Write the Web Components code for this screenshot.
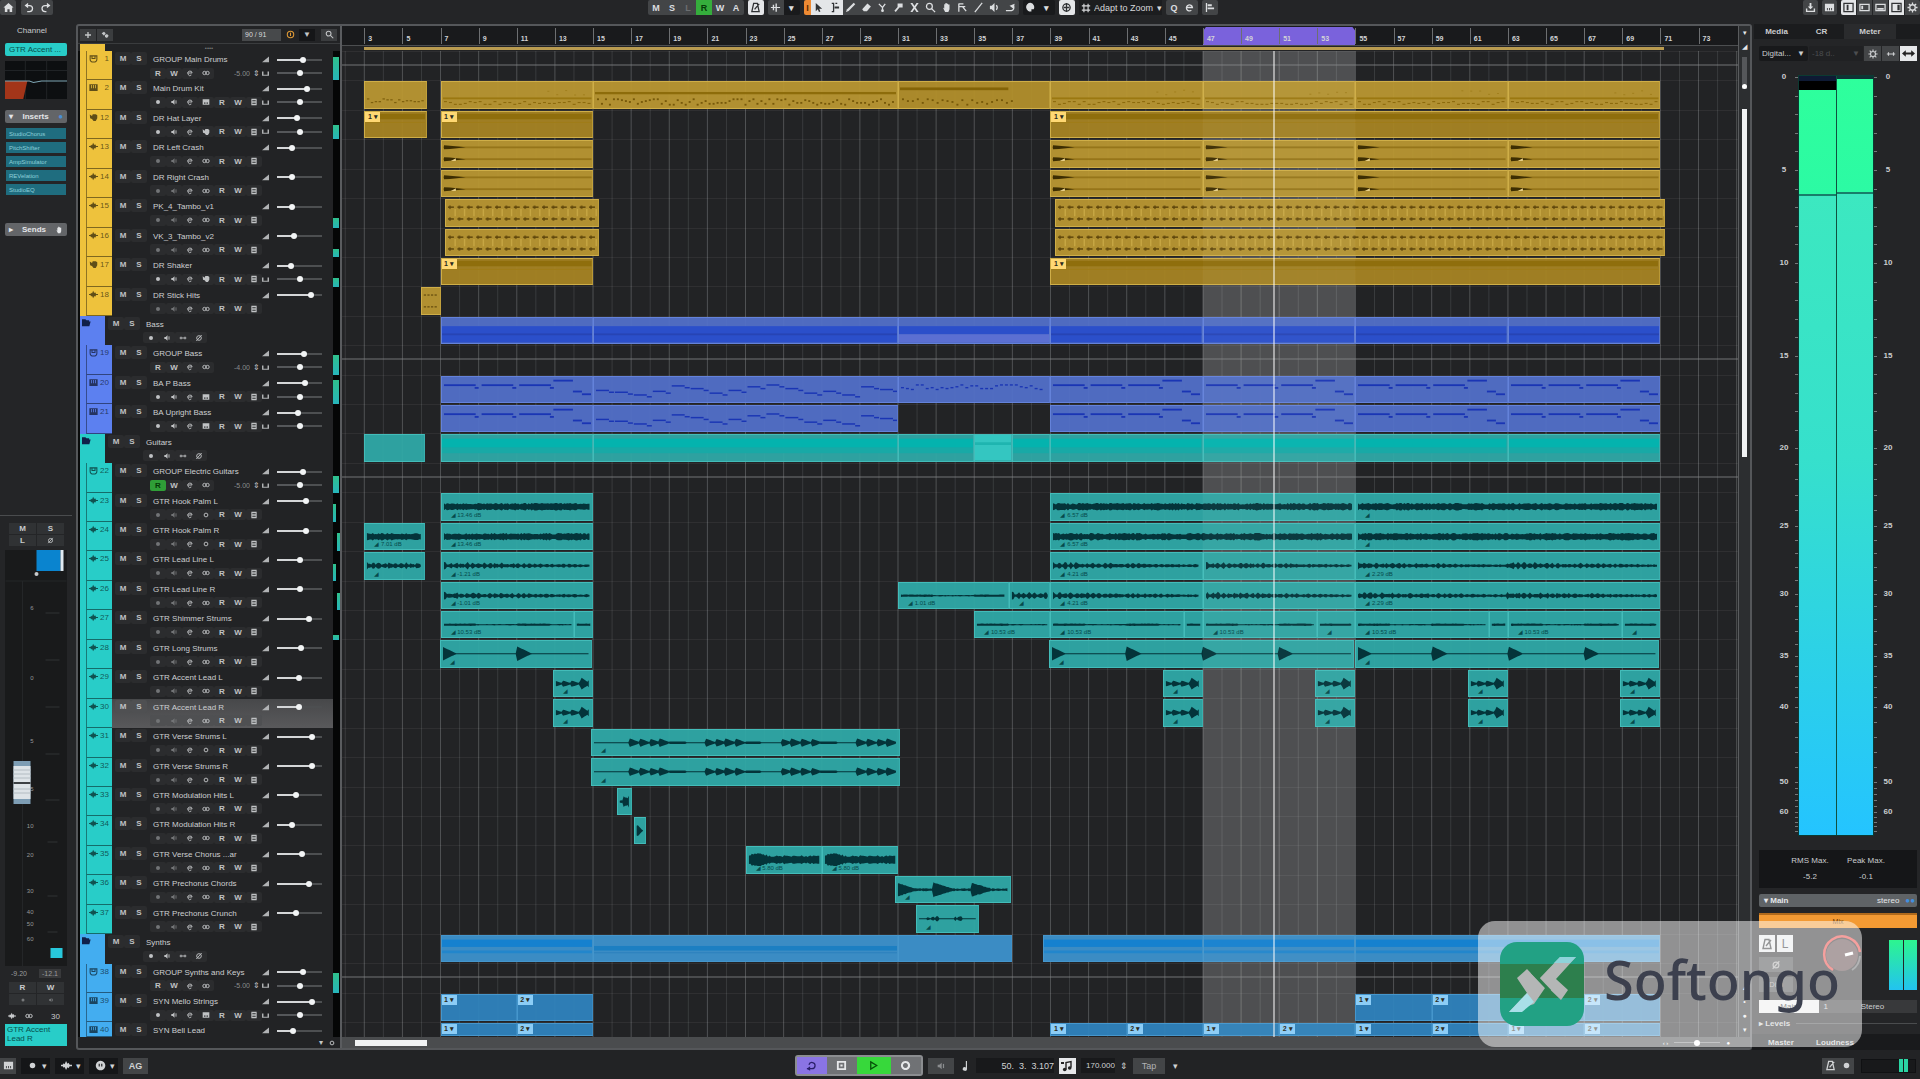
<!DOCTYPE html>
<html lang="en">
<head>
<meta charset="utf-8">
<title>Project</title>
<style>
html,body{margin:0;height:100%;background:#242527}
body{font-family:"Liberation Sans",Arial,sans-serif;font-size:8px;color:#c4c6c8;overflow:hidden}
</style>
</head>
<body>
<daw-app>
  <daw-toolbar slot="top"></daw-toolbar>
  <daw-channel slot="left"></daw-channel>
  <daw-tracklist slot="tracks"></daw-tracklist>
  <daw-arrange slot="arrange"></daw-arrange>
  <daw-meter slot="right"></daw-meter>
  <daw-transport slot="bottom"></daw-transport>
  <daw-brand slot="over">Softongo</daw-brand>
</daw-app>
<script>
const BASE = `
*{box-sizing:border-box}
button,input,select{font:inherit;color:inherit;background:none;border:0;padding:0;margin:0;border-radius:0;appearance:none;outline:0}
button{display:flex;align-items:center;justify-content:center;white-space:nowrap}
svg{display:block;fill:currentColor}
`;
const define = (name, cls) => customElements.define(name, cls);
class Base extends HTMLElement {
  paint(css, html) {
    const root = this.attachShadow({ mode: 'open' });
    root.innerHTML = `<style>${BASE}${css}</style>${html}`;
    return root;
  }
}

const S = 'fill="none" stroke="currentColor" stroke-width="1.4"';
const ICONS = {
  home: '<path d="M6 1 11.500 6H10v5H7.200V8H4.800v3H2V6H.5z"/>',
  undo: `<path ${S} d="M3.500 10.500h2.500a3.300 3.300 0 0 0 0-6.600H2.500"/><path d="M4.500.8v6L.6 3.800z"/>`,
  redo: `<path ${S} d="M7 10.500H5.500a3.300 3.300 0 0 1 0-6.600h4"/><path d="M7.500.8v6l3.900-3z"/>`,
  metro: `<path ${S} d="M4 1.500h4l2 9H2zM5 8l5-6"/>`,
  auto: '<path d="M1 5.500h2V3h1.500v2.500H6V1.500h1.500v4H11v1H7.500v4H6v-4H4.500V9H3V6.500H1z"/>',
  arrow: '<path d="M3 1v9l2.200-2 1.300 3 1.600-.7L6.800 7.400H10z"/>',
  range: `<path ${S} d="M3 1.500h2v9H3M9 1.500H7"/><path d="M6 5h5v2H6z"/>`,
  pencil: '<path d="M9.500.8 11.200 2.500 4 9.700 1 11l1.300-3z"/>',
  eraser: '<path d="M7 1.500 10.800 5 6.500 10H3L1.300 7.800z"/>',
  split: `<path ${S} d="M2 2l4 4 3-4M6 6v3.500"/><circle cx="6" cy="9.500" r="1.500"/>`,
  glue: '<path d="M5 1.500h5.500V6H7L3 11 1.500 9.500 5 5.500z"/>',
  x: '<path d="M1.500 1h2.300L6 4.300 8.200 1h2.300L7.200 6l3.300 5H8.200L6 7.700 3.800 11H1.500l3.300-5z"/>',
  zoom: `<circle ${S} cx="4.800" cy="4.800" r="3.200"/><path ${S} d="M7.200 7.200 11 11"/>`,
  hand: '<path d="M2 6l1.500 1V2.500h1.300V1.200h1.400v.6h1.500v.9h1.600V8L8 11H4.500z"/>',
  comp: `<path ${S} d="M2 1.500v9M2 2h5M2 5h7M6 5l4 5"/>`,
  line: `<path ${S} d="M2 11 10 1"/>`,
  spk: `<path d="M1 4h2l3-3v10L3 8H1z"/><path ${S} d="M8 3.500q2 2.500 0 5"/>`,
  warp: `<path ${S} d="M1 9.500h6a3.500 3.500 0 0 0 2-5.500"/><path d="M5 4l5.500-2-1 5.500z"/>`,
  color: '<path d="M6 .8a4.800 4.800 0 1 0 1 9.500V8H9.500A5 5 0 0 0 6 .8z"/>',
  snap: `<circle ${S} cx="6" cy="6" r="4"/><path ${S} d="M6 1v10M3 6h6"/>`,
  grid: `<path ${S} d="M3.500 1v10M8.500 1v10M1 3.500h10M1 8.500h10"/>`,
  e: `<path ${S} stroke-width="2" d="M3 6h6.200A3.300 3.300 0 1 0 8 9"/>`,
  bars: '<path d="M2 1h1.400v10H2zM4 2.500h4.500v2H4zM4 6h7v2H4z"/>',
  share: '<path d="M5 1h2v4h2L6 8 3 5h2zM1 7h1.500v2.500h7V7H11v4H1z"/>',
  keys: '<path fill-rule="evenodd" d="M1 2h10v8H1zM3.200 6.500v2.500h1V6.500zm2.300 0v2.500h1V6.500zm2.300 0v2.500h1V6.500z"/>',
  win1: `<path ${S} d="M1 1.500h10v9H1z"/><path d="M4 3h2v6H4z"/>`,
  win2: `<path ${S} d="M1 2.500h10v7H1z"/><path d="M2.500 4h2v4h-2z"/>`,
  win3: `<path ${S} d="M1 2.500h10v7H1z"/><path d="M2.500 6.500h7v2h-7z"/>`,
  win4: `<path ${S} d="M1 1.500h10v9H1z"/><path d="M7 3h2.500v6H7z"/>`,
  gear: `<circle ${S} cx="6" cy="6" r="3"/><path ${S} d="M6 .5v2M6 9.500v2M.5 6h2M9.500 6h2M2 2l1.500 1.500M8.500 8.500 10 10M10 2 8.500 3.500M3.500 8.500 2 10"/>`,
  lr: '<path d="M0 6l3.500-3v2h5V3L12 6 8.500 9V7h-5v2z"/>',
  plus: '<path d="M5 1.500h2V5h3.500v2H7v3.500H5V7H1.500V5H5z"/>',
  dup: '<path d="M1 3.500 4.500 1 7 3.500 4.500 7zM6 6l3-1.500L11.500 7 9 10.500 6 9z"/>',
  tempo: `<path ${S} d="M5 9.500V2.500l5-1v6"/><circle cx="3.700" cy="9.500" r="1.800"/><circle cx="8.700" cy="8" r="1.800"/><path d="M0 2h3v2H0z"/>`,
  clock: `<circle ${S} cx="6" cy="6" r="4.300"/><path ${S} d="M6 3.500V8"/>`,
  fold: '<path d="M0 1.500h4.500L6 3h3.500v1.800h2L9.800 11H0z"/>',
  grp: `<path ${S} d="M1.500 2.500h9v4.500a4.500 3.800 0 0 1-9 0zM4 3v3h4V3"/>`,
  inst: '<path fill-rule="evenodd" d="M.5 1.500h11v9H.5zM3 2.500V7h1V2.500zm2.500 0V7h1V2.500zM8 2.500V7h1V2.500z"/>',
  drum: '<path d="M1 2l3 2 1-2.500h4L11 3v4l-2 3.500H6L4 8 1.500 7z"/>',
  wav: '<path d="M0 5.300h1.800L3 3.500l1 1L5.500 1 7 4l1.200-1L9.500 5.300H12v1.400H9.500L8.200 9 7 8 5.500 11 4 7.500l-1 1-1.200-1.800H0z"/>',
  rec: '<circle cx="6" cy="6" r="3"/>',
  mon: `<path d="M2 4.500h2l2.800-2.500v8L4 7.500H2z"/><path ${S} d="M9 3.500v5"/>`,
  st: `<circle ${S} cx="3.700" cy="6" r="2.500"/><circle ${S} cx="8.300" cy="6" r="2.500"/>`,
  mo: `<circle ${S} cx="6" cy="6" r="2.800"/>`,
  pat: '<path fill-rule="evenodd" d="M2 1h8v10H2zM3.500 3v1h5V3zm0 2.500v1h5v-1zm0 2.500v1h5V8z"/>',
  tri: '<path d="M0 10.500 12 1v9.500z"/>',
  pan: '<path d="M0 2.500h2.500V8h7V2.500H12V10H0z"/>',
  slash: `<circle ${S} cx="6" cy="6" r="3.500"/><path ${S} d="M2 10.500 10 1.500"/>`,
  link: `<path ${S} d="M1 6h10M3 4v4M9 4v4"/>`,
  note: '<path d="M7 0h1.400v9.500a2.600 2.200 0 1 1-1.400-1.800z"/>',
  cyc: `<path ${S} d="M1 9.500h5.500a3.400 3.400 0 1 0-3.300-4.300"/><path d="M4.500 6.800v5L.8 9.500z"/>`,
  stop: '<path fill-rule="evenodd" d="M1 1h10v10H1zM3 3v6h6V3zM4.800 4.800h2.400v2.400H4.800z"/>',
  play: `<path ${S} d="M3 2l6.500 4L3 10z"/>`,
  recb: '<path fill-rule="evenodd" d="M6 1a5 5 0 1 0 .1 0zM6 3.300a2.700 2.700 0 1 1-.1 0z"/>',
  pow: '<path d="M6 .8a5.200 5.200 0 1 0 .1 0zM4 4h1.200v3H4zm2.800 0H8v3H6.800z" fill-rule="evenodd"/>'
};
const ic = (n, s = 10) => `<svg viewBox="0 0 12 12" width="${s}" height="${s}" aria-hidden="true">${ICONS[n]}</svg>`;

/* ---------- project data ---------- */
const GOLD = '#eec23c', BLUE = '#5c80f0', TEAL = '#28cdc8', SKY = '#43adf0';
const seq = (from, to, step, extra) => { const r = []; for (let b = from; b < to; b += step) r.push([b, Math.min(b + step, to), ...extra]); return r; };
const hook = db => [[7, 15, 'band', '13.46 dB'], [39, 55, 'band', db], [55, 71, 'band', ' ']];
const TRACKS = [
  { n: 1, k: 'grp', name: 'GROUP Main Drums', v: 58, c: GOLD, m: 23, db: '-5.00' },
  { n: 2, k: 'inst', name: 'Main Drum Kit', v: 67, c: GOLD, clips: [[3, 6.3, 'drum'], [7, 15, 'drumL'], [15, 31, 'drumM'], [31, 39, 'drumH'], [39, 47, 'drumL'], [47, 55, 'drumL'], [55, 63, 'drumL'], [63, 71, 'drumL']] },
  { n: 12, k: 'drum', name: 'DR Hat Layer', v: 45, c: GOLD, m: 14, clips: [[3, 6.3, 'dark', '', '1'], [7, 15, 'dark', '', '1'], [39, 71, 'dark', '', '1']] },
  { n: 13, k: 'wav', name: 'DR Left Crash', v: 34, c: GOLD, clips: [[7, 15, 'crash'], ...seq(39, 71, 8, ['crash'])] },
  { n: 14, k: 'wav', name: 'DR Right Crash', v: 34, c: GOLD, clips: [[7, 15, 'crash'], ...seq(39, 71, 8, ['crash'])] },
  { n: 15, k: 'wav', name: 'PK_4_Tambo_v1', v: 34, c: GOLD, m: 10, clips: [[7.25, 15.3, 'tambo'], [39.25, 71.25, 'tambo']] },
  { n: 16, k: 'wav', name: 'VK_3_Tambo_v2', v: 38, c: GOLD, m: 8, clips: [[7.25, 15.3, 'tambo'], [39.25, 71.25, 'tambo']] },
  { n: 17, k: 'drum', name: 'DR Shaker', v: 30, c: GOLD, m: 9, clips: [[7, 15, 'dark', '', '1'], [39, 71, 'dark', '', '1']] },
  { n: 18, k: 'wav', name: 'DR Stick Hits', v: 76, c: GOLD, clips: [[6, 7, 'sticks']] },
  { k: 'fold', name: 'Bass', c: BLUE, clips: [[7, 15, 'fb'], [15, 31, 'fb'], [31, 39, 'fb2'], ...seq(39, 71, 8, ['fb'])] },
  { n: 19, k: 'grp', name: 'GROUP Bass', v: 60, c: BLUE, m: 20, db: '-4.00' },
  { n: 20, k: 'inst', name: 'BA P Bass', v: 61, c: BLUE, m: 24, clips: [[7, 15, 'bass'], [15, 31, 'bassW'], [31, 39, 'bassD'], ...seq(39, 71, 8, ['bass'])] },
  { n: 21, k: 'inst', name: 'BA Upright Bass', v: 46, c: BLUE, clips: [[7, 15, 'bass'], [15, 31, 'bassW'], ...seq(39, 71, 8, ['bass'])] },
  { k: 'fold', name: 'Guitars', c: TEAL, clips: [[3, 6.2, 'ft2'], [7, 15, 'ft'], [15, 31, 'ft'], [31, 35, 'ft'], [35, 37, 'ft3'], [37, 39, 'ft'], ...seq(39, 71, 8, ['ft'])] },
  { n: 22, k: 'grp', name: 'GROUP Electric Guitars', v: 59, c: TEAL, m: 17, db: '-5.00', on: 1 },
  { n: 23, k: 'wav', name: 'GTR Hook Palm L', v: 65, c: TEAL, m: 18, mo: 1, thin: 'l', clips: hook('6.57 dB') },
  { n: 24, k: 'wav', name: 'GTR Hook Palm R', v: 65, c: TEAL, m: 18, mo: 1, thin: 'r', clips: [[3, 6.2, 'band', '7.01 dB'], ...hook('6.57 dB')] },
  { n: 25, k: 'wav', name: 'GTR Lead Line L', v: 50, c: TEAL, m: 17, thin: 'l', clips: [[3, 6.2, 'blob', ' '], [7, 15, 'blob', '-1.21 dB'], [39, 47, 'blob', '4.21 dB'], [47, 55, 'blobN'], [55, 71, 'blob', '2.29 dB']] },
  { n: 26, k: 'wav', name: 'GTR Lead Line R', v: 50, c: TEAL, m: 17, thin: 'r', clips: [[7, 15, 'blob', '-1.01 dB'], [31, 36.8, 'thin', '1.01 dB'], [36.8, 39, 'blob', ' '], [39, 47, 'blob', '4.21 dB'], [47, 55, 'blobN'], [55, 71, 'blob', '2.29 dB']] },
  { n: 27, k: 'wav', name: 'GTR Shimmer Strums', v: 72, c: TEAL, m: 5, clips: [[7, 14, 'thin', '10.53 dB'], [14, 15, 'thin'], [35, 39, 'thin', '10.53 dB'], [39, 46, 'thin', '10.53 dB'], [46, 47, 'thin'], [47, 53, 'thin', '10.53 dB'], [53, 55, 'thin', ' '], [55, 62, 'thin', '10.53 dB'], [62, 63, 'thin'], [63, 69, 'thin', '10.53 dB'], [69, 71, 'thin', ' ']] },
  { n: 28, k: 'wav', name: 'GTR Long Strums', v: 53, c: TEAL, clips: [[6.95, 14.95, 'long', ' '], [38.9, 54.95, 'long', ' '], [54.95, 70.9, 'long', ' ']] },
  { n: 29, k: 'wav', name: 'GTR Accent Lead L', v: 48, c: TEAL, clips: [12.9, 44.9, 52.9, 60.9, 68.9].map(b => [b, b + 2.1, 'acc', ' ']) },
  { n: 30, k: 'wav', name: 'GTR Accent Lead R', v: 48, c: TEAL, sel: 1, clips: [12.9, 44.9, 52.9, 60.9, 68.9].map(b => [b, b + 2.1, 'acc', ' ']) },
  { n: 31, k: 'wav', name: 'GTR Verse Strums L', v: 77, c: TEAL, mo: 1, clips: [[14.9, 31.1, 'verse', ' ']] },
  { n: 32, k: 'wav', name: 'GTR Verse Strums R', v: 77, c: TEAL, mo: 1, clips: [[14.9, 31.1, 'verse', ' ']] },
  { n: 33, k: 'wav', name: 'GTR Modulation Hits L', v: 42, c: TEAL, clips: [[16.25, 17.05, 'hit2']] },
  { n: 34, k: 'wav', name: 'GTR Modulation Hits R', v: 33, c: TEAL, clips: [[17.15, 17.8, 'hit']] },
  { n: 35, k: 'wav', name: 'GTR Verse Chorus ...ar', v: 55, c: TEAL, clips: [[23, 27, 'fat', '5.80 dB'], [27, 31, 'fat', '5.80 dB']] },
  { n: 36, k: 'wav', name: 'GTR Prechorus Chords', v: 72, c: TEAL, clips: [[30.85, 36.95, 'chord', ' ']] },
  { n: 37, k: 'wav', name: 'GTR Prechorus Crunch', v: 42, c: TEAL, clips: [[31.95, 35.25, 'crunch', ' ']] },
  { k: 'fold', name: 'Synths', c: SKY, clips: [[7, 15, 'fs'], [15, 31, 'fs2'], [31, 37, 'fs3'], [38.6, 47, 'fs'], [47, 55, 'fs'], [55, 71, 'fs']] },
  { n: 38, k: 'grp', name: 'GROUP Synths and Keys', v: 58, c: SKY, m: 20, db: '-5.00' },
  { n: 39, k: 'inst', name: 'SYN Mello Strings', v: 77, c: SKY, clips: [[7, 11, 'syn', '', '1'], [11, 15, 'syn', '', '2'], [55, 59, 'syn', '', '1'], [59, 63, 'syn', '', '2'], [63, 67, 'syn', '', '1'], [67, 71, 'syn', '', '2']] },
  { n: 40, k: 'inst', name: 'SYN Bell Lead', v: 36, c: SKY, half: 1, clips: [7, 11, 39, 43, 47, 51, 55, 59, 63, 67].map((b, i) => [b, b + 4, 'syn', '', String(i % 2 + 1)]) }
];

/* ---------- timeline geometry (in bars) ---------- */
const FIRST = 1.83, SPAN = 73.24;
const at = b => (b - FIRST) / SPAN * 100;

/* ---------- clip artwork ---------- */
const rnd = seed => () => (seed = (seed * 16807) % 2147483647) / 2147483647;
function envelope(w, mid, amp) {
  let up = '', down = '';
  for (let x = 2; x <= w - 2; x += 1.5) { const a = amp(x); up += `L${x.toFixed(1)} ${(mid - a).toFixed(2)}`; down = `L${x.toFixed(1)} ${(mid + a).toFixed(2)}` + down; }
  return `<path d="M2 ${mid}${up}${down}z"/>`;
}
function art(type, bars, seed) {
  const w = bars * 19, r = rnd(seed * 977 + 13);
  const rect = (x, y, ww, h, f = '', o = 1) => `<rect x="${x}" y="${y}" width="${ww}" height="${h}" ${f ? `fill="${f}"` : ''} opacity="${o}"/>`;
  let s = '';
  switch (type) {
    case 'drum': for (let x = 2; x < w - 3; x += 4) s += rect(x, 18 + Math.floor(r() * 5), 2.5, 1.3, '#7c5e0c'); break;
    case 'drumL': s += rect(1, 17, w - 2, 2, '#9b7811'); for (let x = 2; x < w - 3; x += 5) s += rect(x, 21 + Math.floor(r() * 4), 3, 1.2, '#8c6a0c'); for (let x = w * .7; x < w - 8; x += 9) s += rect(x, 8 + r() * 6, 2, 1, '#a07e1c'); break;
    case 'drumM': s += rect(1, 11, w - 2, 2.5, '#8d6c0a'); for (let x = 3; x < w - 4; x += 4) s += rect(x, 18 + Math.floor(r() * 7), 2, 2, '#765809'); break;
    case 'drumH': s += rect(1, 6, w * .72, 3, '#846407'); for (let x = 3; x < w * .75; x += 5) s += rect(x, 18 + Math.floor(r() * 7), 2, 2, '#765809'); break;
    case 'dark': s += rect(1, 2, w - 2, 6, '#8f6e0c'); s += rect(1, 11, w - 2, 1, '#a07c18'); break;
    case 'crash': for (const y of [7, 20]) s += rect(1, y - 1, w - 2, 2, '#8a6a10', .7) + `<path fill="#3c2d02" d="M2 ${y - 2.2}L8 ${y - 1.8} 24 ${y} 8 ${y + 1.8} 2 ${y + 2.2}z"/>`; s += '<path fill="#e8cf86" d="M9 22l5-3v3z"/>'; break;
    case 'tambo': for (let x = 2; x < w - 3; x += 9.5) for (const y of [7, 20]) s += rect(x, y, 6, 1.8, '#5b430a', .85) + rect(x + 1, y - 1, 2, 4, '#5b430a', .6) + (y < 9 ? rect(x + 6.5, y + 3, 1.5, 8, '#dcbb55', .5) : ''); break;
    case 'sticks': for (let x = 2; x < w - 3; x += 4) for (const y of [7, 20]) s += rect(x, y, 2.5, 1.5, '#5b430a', .8); break;
    case 'fb': s += rect(0, 9, w, 18, '#2b4fca') + rect(0, 17, w, 2, '#2744b4'); break;
    case 'fb2': s += rect(0, 9, w, 9, '#2b4fca') + rect(0, 18, w, 9, '#5b6fd2'); break;
    case 'bass': for (let i = 0; i < 3; i++) { const x = w * i / 4; s += rect(x + 2, 8, w / 4 - 6, 2, '#1a35b4') + rect(x + w / 4 - 5, 11, 4, 2, '#1a35b4'); } s += rect(w * .74, 3, w * .13, 2, '#1a35b4') + rect(w * .87, 15, w * .06, 2, '#1a35b4') + rect(w * .93, 18, w * .06, 2, '#1a35b4'); break;
    case 'bassW': { const ys = [14, 16, 19, 15, 9, 12, 17, 14, 10, 8, 12, 17, 15, 19, 10, 13]; for (let x = 2, i = 0; x < w - 8; x += 19, i++) s += rect(x, ys[i % 16], 13, 1.6, '#1a35b4') + rect(x + 13, ys[i % 16] + 2, 5, 1.6, '#1a35b4'); break; }
    case 'bassD': for (let x = 2; x < w - 5; x += 5) s += rect(x, 8 + Math.floor(r() * 6), 3, 1.5, '#1a35b4'); break;
    case 'ft': s += rect(0, 4, w, 10, '#04b3ae') + rect(0, 14, w, 6, '#18a9a6'); break;
    case 'ft3': s += rect(0, 0, w, 28, '#34c6c1') + rect(0, 8, w, 3, '#1fb5b0'); break;
    case 'fs': s += rect(0, 4, w, 8, '#1581cf') + rect(0, 16, w, 3, '#2286cc'); break;
    case 'fs2': s += rect(0, 11, w, 5, '#1c7fc2') + rect(0, 18, w, 1, '#2a7fbd'); break;
    case 'band': s += envelope(w, 14, () => 2.4 + r() * 1.8); break;
    case 'blob': case 'blobN': s += envelope(w, 14, x => .8 + Math.abs(Math.sin(x * .55)) * (1 + r() * 3) * (1 - (x % 152) / 200)); break;
    case 'thin': s += envelope(w, 14, x => .5 + (x % 76 < 34 ? .5 : 0) + r() * .3); break;
    case 'long': s += envelope(w, 14, x => .5 + 7.5 * Math.max(0, 1 - ((x + 75) % 76) / 14)); break;
    case 'acc': s += envelope(w, 14, x => 1 + 2.5 * Math.max(0, 1 - (x % 9) / 8) + (x / w > .7 ? 4 * Math.max(0, 1 - (x / w - .7) * 4) : 0)); break;
    case 'hit': s += envelope(w, 14, x => .4 + 6 * Math.max(0, 1 - Math.abs(x - 3) / 6)); break;
    case 'hit2': s += envelope(w, 14, x => .6 + (x > 6 ? 3 + r() * 3 : r())); break;
    case 'verse': s += envelope(w, 14, x => { const p = (x + 38) % 76; return .6 + (p < 40 && x > 34 ? 4 * (1 - (p % 10) / 10) : p < 56 && x > 34 ? .8 : 0); }); break;
    case 'fat': s += envelope(w, 14, x => 3 + r() * 2 + (x < 22 ? 3 * Math.sin(x / 7) : 0)); break;
    case 'chord': s += envelope(w, 14, x => .8 + 6.5 * Math.max(0, 1 - (x % 38) / 20) + r()); break;
    case 'crunch': s += envelope(w, 14, x => .5 + (Math.abs(x - 16) < 6 || Math.abs(x - 42) < 5 ? r() * 2.2 : .1)); break;
  }
  return `<svg viewBox="0 0 ${w.toFixed(1)} 28" preserveAspectRatio="none" aria-hidden="true" style="fill:#04343a">${s}</svg>`;
}
const FILL = {
  [GOLD]: ['#b99731', '#cfae48', '#ffd873'], [BLUE]: ['#5270c8', '#6482da', '#8fa6f4'],
  [TEAL]: ['#2fa9a7', '#43bcb9', '#7fe8e4'], [SKY]: ['#2f83bd', '#4596cc', '#8ccdf6']
};

define('daw-app', class extends Base {
  connectedCallback() {
    this.paint(`
:host{display:grid;grid-template-rows:24px minmax(0,1fr) 29px;grid-template-columns:76px minmax(0,1fr) 168px;height:100vh;position:relative;background:#242527}
.top,.bottom{grid-column:1/-1;display:grid}
.frame{border:2px solid #55575a;border-radius:3px;display:grid;grid-template-columns:262px 2px minmax(0,1fr);min-height:0;background:#222325}
.split{background:#5a5c5f}
.cell{display:grid;min-height:0}`,
`<div class="top"><slot name="top"></slot></div>
<div class="cell"><slot name="left"></slot></div>
<div class="frame"><div class="cell"><slot name="tracks"></slot></div><div class="split"></div><div class="cell"><slot name="arrange"></slot></div></div>
<div class="cell"><slot name="right"></slot></div>
<div class="bottom"><slot name="bottom"></slot></div>
<slot name="over"></slot>`);
  }
});

define('daw-toolbar', class extends Base {
  connectedCallback() {
    const b = (n, c = '') => `<button class="${c}" aria-label="${n}">${ic(n, 11)}</button>`;
    const t = (n, c = '') => `<button class="${c}">${n}</button>`;
    this.paint(`
:host{display:grid;grid-template-columns:646fr auto 700fr;height:15px;font-size:9px;font-weight:700;color:#d6d8da}
div{display:flex;align-items:stretch}
button{width:16px;background:#434547;color:#dcdee0}
.on{background:#e4e6e8;color:#303234}.g{background:#35ad3c;color:#063a08}.dim{color:#6c6e70}
.o{width:7px;background:#ee8a33;color:#5a2a00}.bl{background:#191a1c}
.c{gap:4px}.l{gap:5px}.r{justify-content:flex-end;gap:4px}
.r .p{gap:1px}.r button{width:15px}
.p{border-radius:2px;overflow:hidden}
label{display:flex;align-items:center;gap:3px;background:#1c1d1f;padding-left:2px;font-weight:400}
select{width:60px}`,
`<div class="l"><div class="p">${b('home')}</div><div class="p">${b('undo')}${b('redo')}</div></div>
<div class="c"><div class="p">${t('M')}${t('S')}${t('L', 'dim')}${t('R', 'g')}${t('W')}${t('A')}</div>
<div class="p">${b('metro', 'on')}</div><div class="p">${b('auto')}${t('▾', 'bl')}</div>
<div class="p"><button class="o">I</button>${b('arrow', 'on')}${b('range', 'on')}${['pencil', 'eraser', 'split', 'glue', 'x', 'zoom', 'hand', 'comp', 'line', 'spk', 'warp'].map(n => b(n)).join('')}</div>
<div class="p">${b('color', 'bl')}<button class="bl">▾</button></div>
<div class="p">${b('snap', 'on')}</div>
<label aria-label="Grid">${ic('grid', 10)}<select><option>Adapt to Zoom</option></select><span>▾</span></label>
<div class="p">${t('Q')}${b('e')}</div><div class="p">${b('bars')}</div></div>
<div class="r"><div class="p">${b('share')}</div><div class="p">${b('keys')}</div><div class="p">${b('win1', 'on')}${b('win2')}${b('win3')}${b('win4', 'on')}${b('gear')}</div></div>`);
  }
});

define('daw-channel', class extends Base {
  connectedCallback() {
    const marks = [[58, '6'], [128, '0'], [191, '5'], [239, '5'], [276, '10'], [305, '20'], [341, '30'], [362, '40'], [374, '50'], [389, '60']];
    this.paint(`
:host{display:flex;flex-direction:column;padding:0 9px 4px 5px;min-height:0;color:#c8cacc}
.title{height:14px;line-height:14px;text-align:center;padding-right:8px}
.name{height:13px;line-height:13px;margin:5px 0;background:${TEAL};color:#07504d;padding-left:4px;border-radius:2px}
.eq{height:38px;background:#0d0f11;width:100%}
.hd{display:flex;justify-content:space-between;align-items:center;height:13px;background:#636568;padding:0 4px;border-radius:2px;color:#e4e6e8;font-weight:700}
.hd i{color:#4a8ed6}
.hd svg{color:#e4e6e8}
.ins{display:grid;gap:3px;margin:5px 1px 28px}
.ins button{height:11px;background:#1f6d7f;color:#8fd0da;font-size:6px;justify-content:flex-start;padding-left:3px}
.top{flex:1;min-height:0;margin-top:11px}
.sp{border-top:1px solid #4a4c4e;margin:0 -5px 6px;height:2px}
.ms{display:grid;grid-template-columns:1fr 1fr;gap:1px;margin:0 3px 0 4px;font-weight:700}
.ms button{height:11px;background:#303234}
.ms .dim{color:#77797b}
.fader{height:416px;margin:4px 0 1px;background:#191a1b;width:100%}
.vals{display:flex;justify-content:space-around;height:12px;align-items:center;font-size:7px;color:#9a9c9e;margin-bottom:3px}
.vals span+span{background:#38393b;padding:1px 3px}
.io{display:flex;align-items:center;justify-content:space-between;height:14px;padding:0 7px 0 3px;margin:4px 0 1px}
.lab{height:22px;background:${TEAL};color:#07504d;font-size:8px;line-height:9px;padding:1px 2px;overflow:hidden}`,
`<div class="title">Channel</div><div class="name">GTR Accent ...</div>
<svg class="eq" viewBox="0 0 61 38" preserveAspectRatio="none"><path d="M0 9.500h61M20 0v38M41 0v38" stroke="#202326"/><path d="M0 20h22l-4 18H0z" fill="#a33519"/><path d="M0 20h24l4 1.500 8-1.500h25" fill="none" stroke="#7fa6b4"/></svg>
<div class="top"><div class="hd"><span>▾</span><span>Inserts</span><i>●</i></div>
<div class="ins">${['StudioChorus', 'PitchShifter', 'AmpSimulator', 'REVelation', 'StudioEQ'].map(x => `<button>${x}</button>`).join('')}</div>
<div class="hd"><span>▸</span><span>Sends</span>${ic('hand', 8)}</div></div>
<div class="sp"></div>
<div class="ms"><button>M</button><button>S</button><button>L</button><button aria-label="Phase">${ic('slash', 7)}</button></div>
<svg class="fader" viewBox="0 0 61 416" font-family="Liberation Sans" font-size="6"><path d="M0 31h61M17 31v385" stroke="#242628"/>
<path d="M31 0h24v21H31z" fill="#0a84cf"/><path d="M55 0h3v21h-3z" fill="#dfe9f0"/><circle cx="31" cy="24" r="2" fill="#c8cacc"/>
<path d="M40 63h14M40 110h14M40 157h14M40 204h14M40 250h14M42 292h10M42 346h10M42 382h10" stroke="#303335"/>
${marks.map(([y, t]) => `<text x="28" y="${y + 2}" text-anchor="end" fill="#96989a">${t}</text>`).join('')}
<path d="M8 211h17v43H8z" fill="#7d9db4"/><path d="M8 216h17v33H8z" fill="#dde3e7"/><path d="M8 220h17M8 224h17M8 228h17M8 239h17M8 243h17" stroke="#b3bcc2"/><path d="M8 233h17" stroke="#3c4043" stroke-width="2"/>
<path d="M45 398h12v10H45z" fill="#28c8dc"/></svg>
<div class="vals"><span>-9.20</span><span>-12.1</span></div>
<div class="ms"><button>R</button><button>W</button><button class="dim" aria-label="Record">${ic('rec', 6)}</button><button class="dim" aria-label="Monitor">${ic('mon', 6)}</button></div>
<div class="io">${ic('wav', 8)}${ic('st', 8)}<span></span><span>30</span></div>
<div class="lab">GTR Accent Lead R</div>`);
  }
});

define('daw-track', class extends Base {
  connectedCallback() {
    const t = TRACKS[this.getAttribute('index')];
    const b = (n, c = '') => `<button class="${c}" aria-label="${n}">${ic(n, 8)}</button>`;
    const x = (n, c = '') => `<button class="${c}">${n}</button>`;
    const RW = x('R') + x('W');
    const live = t.k === 'inst' || t.k === 'drum';
    const dim = live ? '' : 'dim';
    let line2;
    if (t.half) line2 = '';
    else if (t.k === 'fold') line2 = b('rec') + b('mon') + b('link') + b('slash');
    else if (t.k === 'grp') line2 = x('R', t.on ? 'g' : '') + x('W') + b('e') + b('st') + `<output>${t.db}</output><i>⇕</i>`;
    else line2 = b('rec', dim) + b('mon', dim) + b('e') + b(t.k === 'inst' ? 'keys' : t.k === 'drum' ? 'drum' : t.mo ? 'mo' : 'st') + RW + b('pat');
    const range = (lab, icon, v) => `<label class="f" aria-label="${lab}">${ic(icon, 7)}<input type="range" min="0" max="100" value="${Math.round((v * 45 / 100 - 3) / 39 * 100)}" style="--v:${v}%;--f:${lab === 'Pan' ? '#55575a' : '#d4d6d8'}"></label>`;
    const fad = t.k === 'fold' ? '' : range('Volume', 'tri', t.v) + (!t.half && (live || t.k === 'grp') ? range('Pan', 'pan', 50) : '');
    this.paint(`
:host{display:flex;min-height:0;overflow:hidden;padding-left:2px}
.strip{width:6px;background:${t.c}}
.tile{width:26px;display:flex;justify-content:space-between;padding:3px 3px 0 2px;background:${t.c};border-left:1px solid #0006;border-bottom:1px solid #0007;color:#0009;line-height:10px}
.fold .strip{width:25px;padding:2px;color:#10204a}.fold .tile{display:none}
.row{flex:1;display:flex;min-width:0}
.body{flex:1;display:flex;padding:1px 0 0 3px;min-width:0;${t.sel ? 'background:linear-gradient(#47484a,#59595b)' : 'background:#222325'}}
.ms{display:flex;width:35px}
button{width:16px;height:11px;font-size:8px;font-weight:700;color:#c0c2c4;background:#2b2c2e;border-radius:2px}
.ms button{height:13px}
.dim{color:#727476}.g{background:#2f9e37;color:#063a08}
${t.sel ? 'button{background:#4f5052}' : ''}
.mid{width:112px}
.name{height:15px;line-height:15px;padding-left:3px;white-space:nowrap;color:#cdcfd1}
.l2{display:flex;align-items:center;height:12px}
output{width:36px;text-align:right;color:#8a8c8e;font-size:7px}i{font-style:normal;padding-left:3px}
.f{display:flex;align-items:center;gap:8px;height:15px}
.f+.f{height:12px}
.f svg{color:#b0b2b4}
input{width:45px;height:8px;background:linear-gradient(90deg,var(--f) var(--v),#4d4f51 var(--v)) center/100% 2px no-repeat}
input::-webkit-slider-thumb{appearance:none;width:6px;height:6px;border-radius:3px;background:#f2f4f5}
.m{width:7px;background:#050606;display:flex;align-items:flex-end;margin-left:auto}
.m b{display:block;height:${t.m || 0}px;width:${t.thin ? 3 : 6}px;margin-left:${t.thin === 'r' ? 4 : 0}px;background:linear-gradient(#2fc08c,#27b5bb)}`,
`<div class="row ${t.k}"><div class="strip">${t.k === 'fold' ? ic('fold', 9) : ''}</div><div class="tile">${t.k === 'fold' ? '' : ic(t.k, 9) + `<span>${t.n}</span>`}</div>
<div class="body"><div class="ms">${x('M')}${x('S')}</div><div class="mid"><div class="name">${t.name}</div><div class="l2">${line2}</div></div><div>${fad}</div></div></div>
<div class="m"><b></b></div>`);
  }
});

define('daw-tracklist', class extends Base {
  connectedCallback() {
    this.paint(`
:host{display:flex;flex-direction:column;min-height:0}
.hd{display:flex;align-items:center;gap:1px;height:17px;padding:0 3px 0 2px}
.hd button{width:16px;height:12px;background:#3b3d3f}
.hd input{width:39px;height:12px;background:#47494b;padding-left:3px;font-size:7px;color:#d8dadc}
.hd .gap{flex:1}.hd .o{color:#e09a35;background:none}.hd .k{background:#151618}.hd .s{margin-left:5px}
.dots{height:8px;display:flex;justify-content:center;align-items:center;color:#77797b;font-size:6px;border-top:1px solid #3a3c3e;background:linear-gradient(90deg,#0000 2px,${GOLD} 2px,${GOLD} 27px,#0000 27px)}
.rows{flex:1;display:flex;flex-direction:column;min-height:0;background:#0a0b0b}
daw-track{flex:2 1 0}
.half{flex:1 1 0}
.ft{height:11px;display:flex;justify-content:flex-end;align-items:center;gap:5px;padding-right:4px}`,
`<div class="hd"><button aria-label="Add track">${ic('plus', 8)}</button><button aria-label="Duplicate">${ic('dup', 8)}</button><span class="gap"></span><input aria-label="Visible tracks" value="90 / 91"><button class="o" aria-label="History">${ic('clock', 9)}</button><button class="k">▼</button><button class="s" aria-label="Find">${ic('zoom', 9)}</button></div>
<div class="dots">••••</div>
<div class="rows">${TRACKS.map((t, i) => `<daw-track index="${i}" class="${t.half ? 'half' : ''}"></daw-track>`).join('')}</div>
<div class="ft"><span>▾</span>${ic('mo', 8)}</div>`);
  }
});

define('daw-lane', class extends Base {
  connectedCallback() {
    const i = +this.getAttribute('index'), t = TRACKS[i], f = FILL[t.c];
    const clips = (t.clips || []).map((c, j) => {
      const [a, z, type, lab, badge] = c;
      return `<div class="clip ${type}" style="left:${at(a)}%;width:${(z - a) / SPAN * 100}%">${art(type, z - a, i * 7 + (type === 'fat' ? 0 : j) + 1)}${lab ? `<span>◢ ${lab.trim()}</span>` : ''}${badge ? `<b>${badge} ▾</b>` : ''}</div>`;
    }).join('');
    this.paint(`
:host{display:block;position:relative;min-height:0;border-top:1px solid #ffffff0f;${t.k === 'grp' ? 'background:linear-gradient(#85878966,#85878966) 0 12px/100% 2px no-repeat' : ''}}
.clip{position:absolute;top:0;bottom:1px;background:${f[0]}f2;border:1px solid ${f[1]};border-right-color:${f[1]}88;overflow:hidden}
.clip svg{position:absolute;inset:0;width:100%;height:100%}
.dark{background:#a68423f2}.drumH{background:#b28f2bf2}
.fs,.fs2,.fs3{background:#3b8cc4}
span{position:absolute;left:9px;bottom:1px;font-size:6px;line-height:7px;color:#064a4c;white-space:nowrap}
b{position:absolute;left:0;top:0;width:15px;height:10px;font-size:7px;line-height:10px;text-align:center;background:${f[2]};color:#2a2a20}`, clips);
  }
});

define('daw-arrange', class extends Base {
  connectedCallback() {
    let lines = '', labels = '';
    for (let b = 2; b <= 75; b++) lines += `<line x1="${at(b)}%" x2="${at(b)}%" y1="0" y2="100%" stroke="${b % 2 ? '#505254' : '#393b3d'}"/>`;
    for (let b = 3; b <= 73; b += 2) labels += `<span style="left:${at(b)}%">${b}</span>`;
    this.paint(`
:host{display:grid;grid-template-columns:minmax(0,1fr) 12px;grid-template-rows:19px 6px minmax(0,1fr) 11px;min-height:0}
.ruler{position:relative;background:#191a1c;overflow:hidden}
.ruler span{position:absolute;top:2px;bottom:1px;border-left:1px solid #6d6f71;padding:7px 0 0 3px;font-size:7px;font-weight:700;line-height:8px;color:#d2d4d6}
.cyc{position:absolute;top:1px;bottom:0;left:${at(47)}%;width:${8 / SPAN * 100}%;background:#7a62dc;clip-path:polygon(3px 0,calc(100% - 3px) 0,100% 4px,100% 100%,0 100%,0 4px)}
.mark{position:relative;border-top:1px solid #4c4e50}
.mark i{position:absolute;left:${at(3)}%;width:${68.2 / SPAN * 100}%;top:1px;height:3px;background:#b99b50}
.canvas{position:relative;display:flex;flex-direction:column;min-height:0;background:#222325;overflow:hidden}
.canvas>svg{position:absolute;inset:0;width:100%;height:100%}
.sel{position:absolute;top:0;bottom:0;left:${at(47)}%;width:${8 / SPAN * 100}%;background:#ffffff2e}
.tint{background:#ffffff08;pointer-events:none}
.cur{position:absolute;top:0;bottom:0;left:${at(50.7)}%;width:2px;background:#ffffff80}
daw-lane{flex:2 1 0}.half{flex:1 1 0}
.v{grid-row:1/4;grid-column:2;background:#2c2e30;border-left:1px solid #5a5c5e;display:flex;flex-direction:column;align-items:center;gap:6px;padding:3px 2px;color:#e6e8ea;font-size:7px;line-height:8px}
.v .z{width:5px;height:32px;background:#55575a;display:flex;align-items:flex-end}
.v .z b{width:5px;height:5px;border-radius:3px;background:#fff}
.v .t{width:5px;height:348px;background:#f0f2f3;margin-top:14px}
.v .sp{flex:1}
.h{grid-column:1/3;background:#4a4c4e;display:flex;align-items:center;padding:0 20px 0 13px;gap:6px;color:#fff;font-size:6px}
.h b{width:72px;height:6px;background:#f0f2f3}.h span{flex:1}
.h input{width:46px;height:6px;background:linear-gradient(#8a8c8e,#8a8c8e) center/100% 1px no-repeat}
.h input::-webkit-slider-thumb{appearance:none;width:6px;height:6px;border-radius:3px;background:#fff}`,
`<div class="ruler"><div class="cyc"></div>${labels}</div>
<div class="v"><span>▾</span><span>◢</span><span class="z"><b></b></span><span class="t"></span><span class="sp"></span><span>▴</span><span>•</span><span>●</span><span>▾</span></div>
<div class="mark"><i></i></div>
<div class="canvas"><svg aria-hidden="true">${lines}</svg><div class="sel"></div>${TRACKS.map((t, i) => `<daw-lane index="${i}" class="${t.half ? 'half' : ''}"></daw-lane>`).join('')}<div class="sel tint"></div><div class="cur"></div></div>
<div class="h"><b></b><span></span>‹ › <input type="range" aria-label="Horizontal zoom" value="50"> ●</div>`);
  }
});

define('daw-meter', class extends Base {
  connectedCallback() {
    const steps = [[0, 93], [5, 93], [10, 93], [15, 92], [20, 79], [25, 68], [30, 62], [35, 51], [40, 75], [50, 30], [60, 24]];
    const scale = c => `<div class="scale ${c}">${steps.map(([n, h]) => `<div style="flex:${h} 1 0"><span>${n}</span></div>`).join('')}</div>`;
    this.paint(`
:host{display:flex;flex-direction:column;padding:0 7px 0 7px;min-height:0;color:#cbcdcf}
.tabs{display:flex;height:15px;margin:0 -7px 0 -5px;background:#1b1c1e}
.tabs button{width:45px;font-weight:700;height:15px}.tabs .on{background:#2a2b2d;width:52px}
.ctl{display:flex;height:15px;margin:7px 0 14px;gap:1px}
.ctl label{display:flex;align-items:center;justify-content:space-between;background:#18191b;width:49px;padding:0 3px;border-radius:2px}
.ctl select{width:36px}.ctl .d{color:#4c4e50;background:#202123;width:54px}
.ctl button{width:17px;background:#434547}.ctl .on{background:#e6e8ea;color:#222}
.meters{flex:1;display:grid;grid-template-columns:minmax(0,1fr) 76px minmax(0,1fr);min-height:0;margin-right:4px}
.scale{display:flex;flex-direction:column;padding-top:2px}
.scale div{padding:0 3px;display:flex;justify-content:flex-end;background:repeating-linear-gradient(#77797b 0 1px,#0000 1px 20%) right/3px 100% no-repeat}
.scale.r div{justify-content:flex-start;background-position:left}
.scale span{line-height:10px;height:10px;margin-top:-5px;width:12px;text-align:center;font-weight:700;margin-right:5px}
.scale.r span{margin:-5px 0 0 5px}
.bars{display:grid;grid-template-columns:1fr 1fr;gap:1px;background:#10503f;border:1px solid #0c3a32}
.bars div{background:linear-gradient(#187e6a,#187e6a) 0 var(--p)/100% 2px no-repeat,linear-gradient(#2eff9c,#2cfaa4 var(--p),#3ce8c0 var(--p),#36e0cc 50%,#24c4ff)}
.bars .a{--p:15%;border-top:5px solid #0e1a34;box-shadow:inset 0 9px #000}
.bars .b{--p:15%;border-top:3px solid #0e3436}
.pk{display:grid;grid-template-columns:1fr 1fr;height:38px;margin:14px 0 6px;padding:3px 23px;background:#151618;text-align:center;line-height:16px}
.main{display:flex;gap:6px;height:13px;align-items:center;background:#5f6366;padding:0 2px 0 5px;color:#e6e8ea;font-weight:700;border-radius:2px}
.main span{flex:1;text-align:right;font-weight:400}.main i{color:#3f90e0;font-style:normal}
.mix{height:15px;margin:6px 0;background:#f39a33;border-top:2px solid #b06a1c;color:#6a3a08;line-height:13px;text-align:center;font-size:7px}
.blk{display:grid;grid-template-columns:36px 1fr 28px;height:62px;gap:14px;align-items:center}
.bt{display:grid;grid-template-columns:16px 16px;gap:2px 2px;align-content:start;height:60px}
.bt button{height:17px;background:#e6e8ea;color:#2a2c2e;font-size:12px}.bt .w{grid-column:1/3;height:15px;margin-top:3px;background:#444648;color:#aaa;font-size:8px}
.kn{justify-self:center;align-self:start}
.mm{display:grid;grid-template-columns:1fr 1fr;height:50px;gap:1px}.mm i{background:linear-gradient(#2df58f,#22c3f0)}
.in{display:flex;height:13px;margin:4px 0}
.in button{width:60px;background:#ececec;color:#2a2a2a}.in label{flex:1;display:flex;background:#38393b;align-items:center}
.in select{flex:1;text-align:center;text-align-last:center}
.lv{display:flex;align-items:center;gap:6px;height:13px;font-weight:700}.lv i{flex:1;height:1px;background:#4a4c4e}
.bt2{display:flex;height:16px;margin:4px -7px 0;background:#191a1c}.bt2 button{width:54px;padding-left:4px;font-weight:700}`,
`<div class="tabs"><button>Media</button><button>CR</button><button class="on">Meter</button></div>
<div class="ctl"><label aria-label="Scale"><select><option>Digital...</option></select>▼</label><label class="d" aria-label="Reference"><select><option>-18 d..</option></select>▼</label><button aria-label="Settings">${ic('gear', 10)}</button><button aria-label="Reset">${ic('link', 10)}</button><button class="on" aria-label="Width">${ic('lr', 13)}</button></div>
<div class="meters">${scale('l')}<div class="bars"><div class="a"></div><div class="b"></div></div>${scale('r')}</div>
<div class="pk"><span>RMS Max.</span><span>Peak Max.</span><span>-5.2</span><span>-0.1</span></div>
<div class="main">▾ Main<span>stereo</span><i>●●</i></div><div class="mix">Mix</div>
<div class="blk"><div class="bt"><button aria-label="Metronome">${ic('metro', 12)}</button><button>L</button><button class="w" aria-label="Phase">${ic('slash', 10)}</button><button class="w">Dim</button></div>
<svg class="kn" viewBox="0 0 42 42" width="42" height="42"><circle cx="21" cy="21" r="16" fill="#5a4244"/><path d="M12 36A18 18 0 1 1 39 18" fill="none" stroke="#e8403c" stroke-width="2.500"/><path d="M39 22a18 18 0 0 1-8 14" fill="none" stroke="#66686a" stroke-width="2"/><path d="M24 21l8-2" stroke="#fff" stroke-width="3"/></svg>
<div class="mm"><i></i><i></i></div></div>
<div class="in"><button>Main</button><label aria-label="Output">&nbsp; 1<select><option>Stereo</option></select></label></div>
<div class="lv">▸ Levels<i></i></div>
<div class="bt2"><button>Master</button><button>Loudness</button></div>`);
  }
});

define('daw-transport', class extends Base {
  connectedCallback() {
    const b = (n, c = '') => `<button class="${c}" aria-label="${n}">${ic(n, 11)}</button>`;
    this.paint(`
:host{display:grid;grid-template-columns:797fr auto 740fr;align-items:center;padding-top:2px;height:29px;box-sizing:border-box;background:#222325;color:#d0d2d4;font-size:9px}
div{display:flex;align-items:center}
button{height:16px;width:16px;background:#434547}
.l{gap:5px}.p{background:#151618;gap:2px;padding:0 3px}.p button{background:none}.ag{width:25px;font-weight:700}
.c{gap:5px}
.tr{border:2px solid #8b8d90;border-radius:3px;height:21px}.tr button{width:30px;height:17px;background:#707275;color:#e6e8ea}
.tr .u{background:#8a74e4;color:#2a1f6a}.tr .g{background:#37d83b;color:#06500a;width:34px}
.c>button{width:26px;color:#8a8c8e}.c>.on{background:#e6e8ea;color:#222;width:17px}.c>.tap{width:32px;color:#b0b2b4}
input{background:#18191b;height:15px;text-align:right}.pos{width:78px}.tmp{width:34px;font-size:8px}
.c>.none{background:none;width:12px;color:#d0d2d4}
.r{justify-content:flex-end;gap:7px;padding-right:4px}
.lv{width:55px;height:14px;background:#18191b;justify-content:flex-end;gap:1px;padding-right:7px;border:1px solid #101113}.lv i{width:4px;height:13px;background:#2ad6a4}`,
`<div class="l"><button aria-label="Keyboard">${ic('keys', 11)}</button><div class="p">${b('rec')}▾</div><div class="p">${b('wav')}▾</div><div class="p">${b('pow')}▾</div><button class="ag">AG</button></div>
<div class="c"><div class="tr">${b('cyc', 'u')}${b('stop')}${b('play', 'g')}${b('recb')}</div>
<button aria-label="Punch">${ic('mon', 10)}</button><button class="none" aria-label="Format">${ic('note', 10)}</button><input class="pos" aria-label="Position" value="50.  3.  3.107"><button class="on" aria-label="Tempo track">${ic('tempo', 12)}</button><input class="tmp" aria-label="Tempo" value="170.000"><span>⇕</span><button class="tap">Tap</button><button class="none">▾</button></div>
<div class="r"><div>${b('metro')}${b('rec')}</div><div class="lv"><i></i><i></i></div></div>`);
  }
});

define('daw-brand', class extends Base {
  connectedCallback() {
    this.paint(`
:host{position:absolute;right:58px;bottom:32px;display:flex;align-items:center;gap:20px;box-sizing:border-box;width:384px;height:126px;padding:0 22px;border-radius:17px;background:#ffffff80;color:#3c404e;font:500 54px/74px "Noto Sans","Open Sans",sans-serif}
svg{flex:none}
span{padding-bottom:10px}`,
`<svg viewBox="0 0 84 84" width="84" height="84"><rect width="84" height="84" rx="17" fill="#22a184"/><path d="M0 22h84v34H0z" fill="#2d7f4d"/><path d="M17 36 27 27 45 46 34 62 9 70 27 51z" fill="#b4b6b6"/><path d="M9 70 27 51 34 60 22 70z" fill="#a9dfe8"/><path d="M76 15H60L39 37 61 58 68 48 56 37z" fill="#b4b6b6"/><path d="M76 15H60L54 21h16z" fill="#8fd3da"/><path d="M32 30 50 49" stroke="#2d7f4d" stroke-width="3"/></svg><span><slot></slot></span>`);
  }
});
</script>
</body>
</html>
